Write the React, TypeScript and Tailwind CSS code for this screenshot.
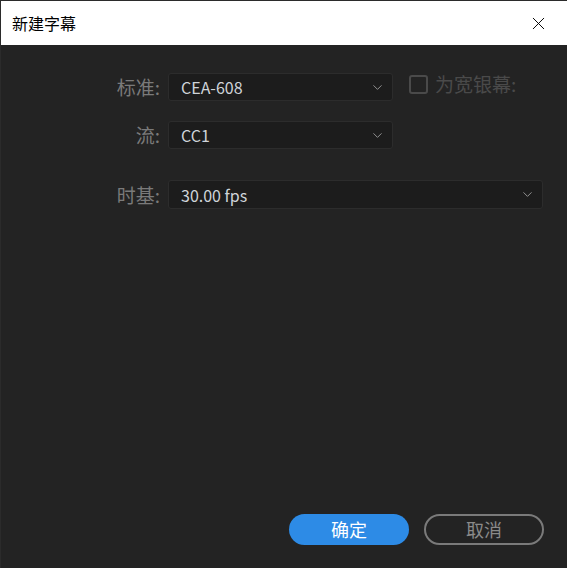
import { ChevronDown, X } from "lucide-react";

const FONT = {
  fontFamily: '"Noto Sans CJK SC", "Noto Sans", "Open Sans", sans-serif',
};

function Select({ value, wide }: { value: string; wide?: boolean }) {
  return (
    <div
      className={`flex items-center justify-between rounded-[3px] border border-[#2c2c2c] bg-[#1c1c1c] pl-[12px] pr-[7px] ${
        wide ? "h-[29px] w-[375px]" : "h-[28px] w-[225px]"
      }`}
    >
      <span className="text-[16px] text-[#cfd4d9]">{value}</span>
      <ChevronDown className="h-[15px] w-[15px] text-[#a0a0a0]" strokeWidth={1.4} />
    </div>
  );
}

function Label({ children }: { children: string }) {
  return (
    <div className="w-[167px] pr-[8px] text-right text-[19px] leading-[28px] text-[#7a7a7a]">
      {children}
    </div>
  );
}

export default function App() {
  return (
    <div
      className="flex h-[568px] w-[567px] flex-col border-t border-l border-[#2b2b2b] bg-[#232323]"
      style={FONT}
    >
      <div className="flex h-[44px] items-center justify-between bg-white pl-[11px] pr-[18px]">
        <span className="text-[16px] text-black">新建字幕</span>
        <X className="h-[21px] w-[21px] text-black" strokeWidth={1.1} />
      </div>

      <div className="flex flex-1 flex-col pt-[28px]">
        <div className="flex items-center">
          <Label>标准:</Label>
          <Select value="CEA-608" />
          <div className="ml-[16px] flex items-center gap-[7px] -mt-[6px]">
            <div className="h-[19px] w-[19px] rounded-[3px] border-2 border-[#4a4a4a]" />
            <span className="text-[19px] leading-[28px] text-[#4a4a4a]">为宽银幕:</span>
          </div>
        </div>

        <div className="mt-[20px] flex items-center">
          <Label>流:</Label>
          <Select value="CC1" />
        </div>

        <div className="mt-[31px] flex items-center">
          <Label>时基:</Label>
          <Select value="30.00 fps" wide />
        </div>

        <div className="mt-auto mb-[23px] flex justify-end gap-[15px] pr-[23px]">
          <button className="h-[31px] w-[120px] rounded-full bg-[#2d8be6] text-[18px] text-white">
            确定
          </button>
          <button className="h-[31px] w-[120px] rounded-full border-2 border-[#7a7a7a] text-[18px] text-[#8a8a8a]">
            取消
          </button>
        </div>
      </div>
    </div>
  );
}
